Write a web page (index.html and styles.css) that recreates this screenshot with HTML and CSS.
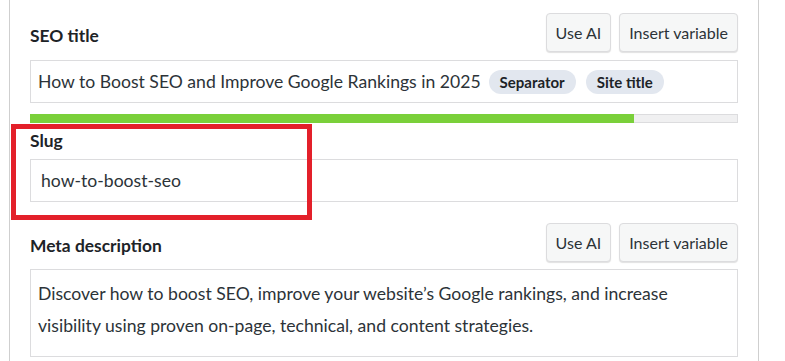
FILE: index.html
```html
<!DOCTYPE html>
<html lang="en">
<head>
<meta charset="utf-8">
<title>SEO settings</title>
<link rel="stylesheet" href="styles.css">
</head>
<body>
<div class="panel">
  <div class="field">
    <div class="field-head">
      <label class="label">SEO title</label>
      <div class="actions">
        <button class="btn">Use AI</button>
        <button class="btn">Insert variable</button>
      </div>
    </div>
    <div class="input title-input">
      <span>How to Boost SEO and Improve Google Rankings in 2025</span>
      <span class="pill">Separator</span>
      <span class="pill">Site title</span>
    </div>
    <div class="progress"><div class="progress-bar" style="width:85.5%"></div></div>
  </div>

  <div class="field slug-field">
    <label class="label">Slug</label>
    <div class="input slug-input">how-to-boost-seo</div>
  </div>

  <div class="field meta-field">
    <div class="field-head">
      <label class="label">Meta description</label>
      <div class="actions">
        <button class="btn">Use AI</button>
        <button class="btn">Insert variable</button>
      </div>
    </div>
    <div class="textarea">Discover how to boost SEO, improve your website’s Google rankings, and increase visibility using proven on-page, technical, and content strategies.</div>
  </div>

  <div class="highlight"></div>
</div>
</body>
</html>
```

FILE: styles.css
```css
* { box-sizing: border-box; }

html, body {
  margin: 0;
  padding: 0;
  background: #ffffff;
}

body {
  font-family: Lato, "Open Sans", sans-serif;
  color: #1d2327;
  height: 361px;
  overflow: hidden;
}

.panel {
  position: relative;
  margin-left: 9px;
  width: 750px;
  height: 361px;
  border-left: 1px solid #cfcfcf;
  border-right: 1px solid #cfcfcf;
  padding: 13px 20px 0 20px;
}

.field-head {
  display: flex;
  align-items: flex-end;
  justify-content: space-between;
}

.label {
  display: block;
  font-size: 17.4px;
  font-weight: 700;
  line-height: 24px;
  color: #1d2327;
}

.field-head .label {
  margin-bottom: 4px;
}

.actions {
  display: flex;
  gap: 8px;
}

.btn {
  font-family: inherit;
  font-size: 16px;
  color: #2c3338;
  height: 39px;
  padding: 0 9px;
  background: #f6f7f7;
  border: 1px solid #dcdcde;
  border-radius: 4px;
  box-shadow: 0 1px 1px rgba(0, 0, 0, 0.12);
}

.input {
  margin-top: 8px;
  height: 43px;
  border: 1px solid #dcdcde;
  display: flex;
  align-items: center;
  font-size: 17.6px;
  color: #2c3338;
}

.title-input {
  padding-left: 7px;
  gap: 8px;
}

.pill {
  display: inline-flex;
  align-items: center;
  height: 24px;
  padding: 0 11px;
  border-radius: 12px;
  background: #e2e7ef;
  font-size: 15px;
  font-weight: 700;
  color: #1d2327;
}

.title-input .pill + .pill { margin-left: 2px; }

.progress {
  margin-top: 11px;
  height: 9px;
  background: #f0f0f1;
  border: 1px solid #dcdcde;
}

.progress-bar {
  margin: -1px 0 0 -1px;
  height: 9px;
  background: #7ad03a;
}

.slug-field {
  margin-top: 6px;
}

.slug-input {
  margin-top: 6px;
  padding-left: 10px;
}

.meta-field {
  margin-top: 21px;
}

.textarea {
  margin-top: 7px;
  height: 88px;
  border: 1px solid #dcdcde;
  padding: 8px 7px;
  font-size: 17.6px;
  line-height: 32px;
  color: #2c3338;
}

.highlight {
  position: absolute;
  left: 1px;
  top: 124px;
  width: 301px;
  height: 96px;
  border: 5px solid #e3202a;
}
```
